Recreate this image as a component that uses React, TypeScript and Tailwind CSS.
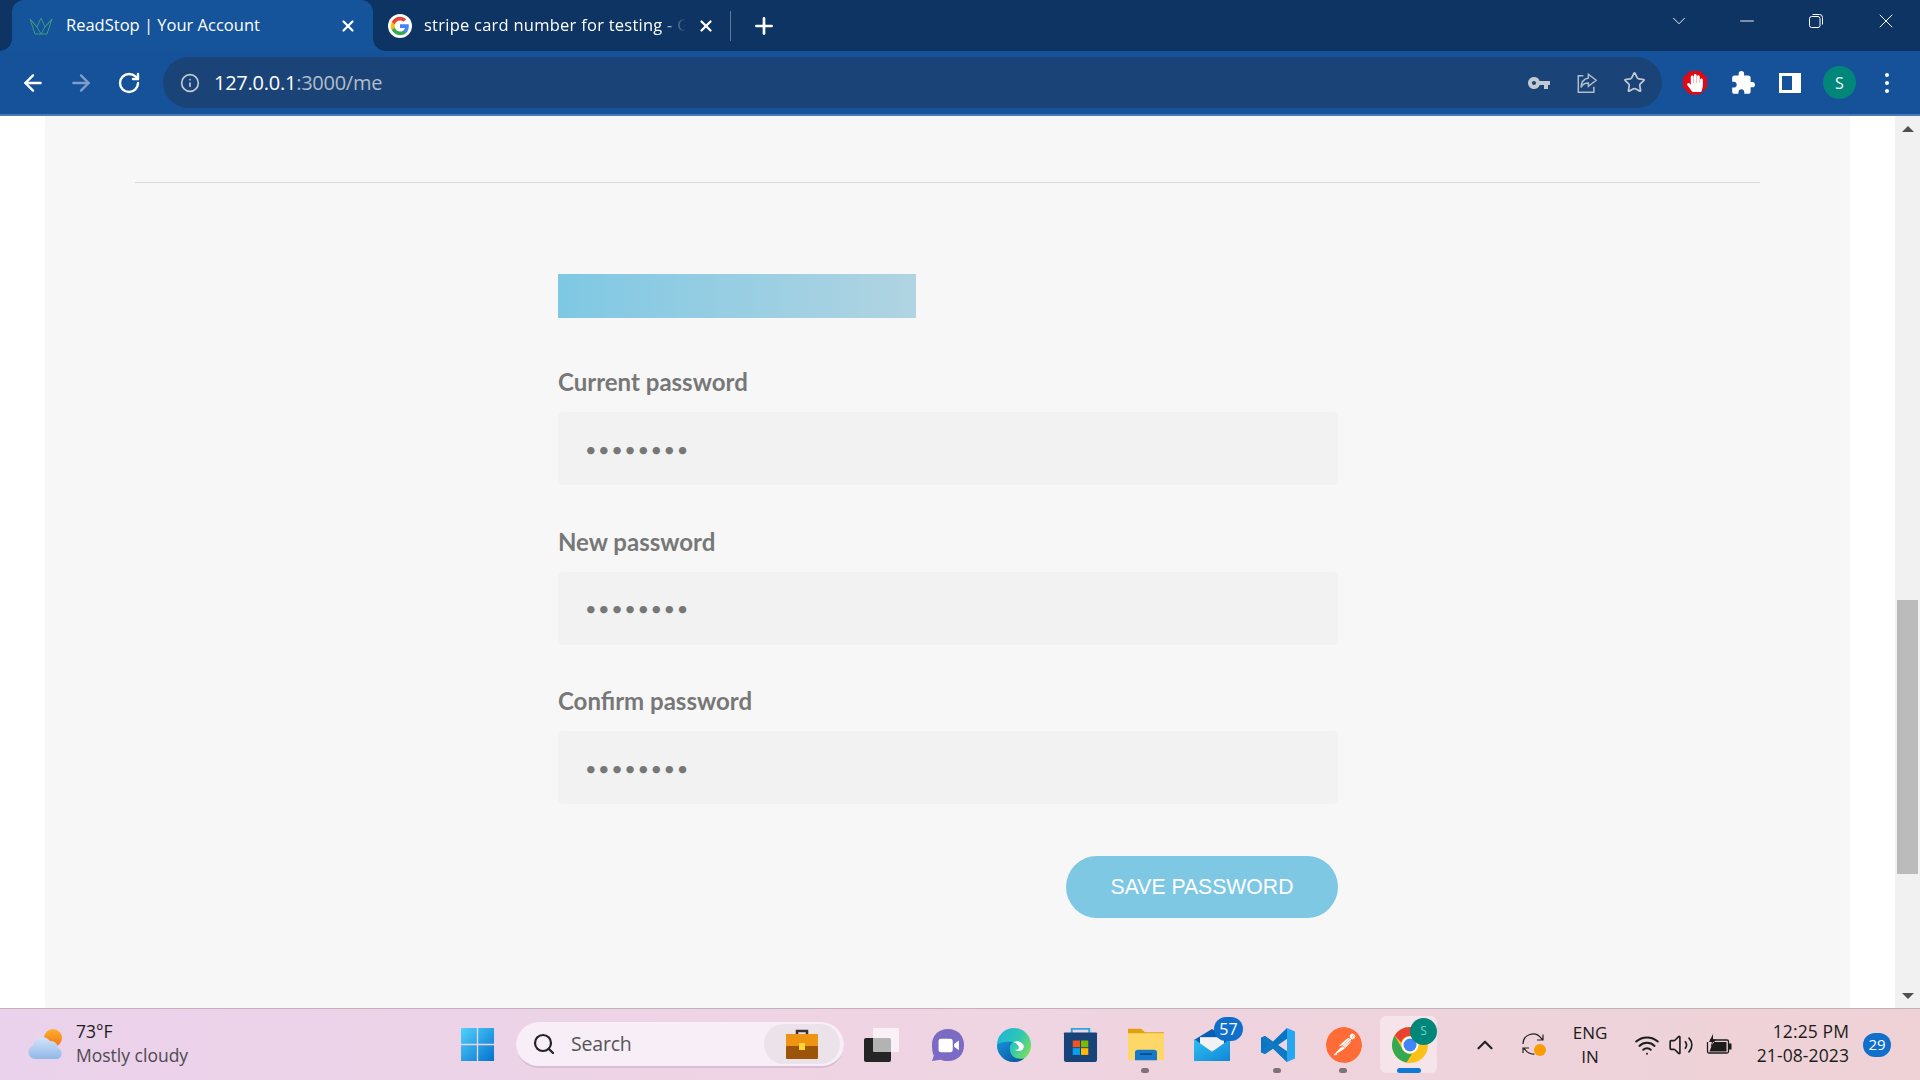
import { ArrowLeft, ArrowRight, ChevronDown, ChevronUp, Info, Minus, Plus, RotateCw, Search, Star, Volume2, Wifi, X } from 'lucide-react'
import type { ReactNode } from 'react'
import { FaHandPaper } from 'react-icons/fa'
import { MdExtension, MdVpnKey } from 'react-icons/md'
import { SiPostman } from 'react-icons/si'

const fields = ['Current password', 'New password', 'Confirm password']

function GoogleIcon() {
  return (
    <span className="flex h-6 w-6 shrink-0 items-center justify-center rounded-full bg-white">
      <svg viewBox="0 0 24 24" className="h-5 w-5">
        <path fill="#4285F4" d="M22.56 12.25c0-.78-.07-1.53-.2-2.25H12v4.26h5.92c-.26 1.37-1.04 2.53-2.21 3.31v2.77h3.57c2.08-1.92 3.28-4.74 3.28-8.09z" />
        <path fill="#34A853" d="M12 23c2.97 0 5.46-.98 7.28-2.66l-3.57-2.77c-.98.66-2.23 1.06-3.71 1.06-2.86 0-5.29-1.93-6.16-4.53H2.18v2.84C3.99 20.53 7.7 23 12 23z" />
        <path fill="#FBBC05" d="M5.84 14.09c-.22-.66-.35-1.36-.35-2.09s.13-1.43.35-2.09V7.07H2.18C1.43 8.55 1 10.22 1 12s.43 3.45 1.18 4.93l3.66-2.84z" />
        <path fill="#EA4335" d="M12 5.38c1.62 0 3.06.56 4.21 1.64l3.15-3.15C17.45 2.09 14.97 1 12 1 7.7 1 3.99 3.47 2.18 7.07l3.66 2.84c.87-2.6 3.3-4.53 6.16-4.53z" />
      </svg>
    </span>
  )
}

function CrownIcon() {
  return (
    <svg viewBox="0 0 24 20" className="h-5 w-6 shrink-0" fill="none" stroke="#3c9a7f" strokeWidth="1">
      <path d="M1 3l5 15h12l5-15-7 8-4-9-4 9zM8 11l4 7 4-7M1 3l7 8M23 3l-7 8" />
    </svg>
  )
}

function ShareIcon() {
  return (
    <svg viewBox="0 0 24 24" className="h-[22px] w-[22px]" fill="none" stroke="#b3bdc9" strokeWidth="1.6">
      <path d="M8 4H2.5v18h17v-6" />
      <path d="M13.5 2.5 22 9l-8.500 6.500V12c-4 0-6.500 1.500-8 5 0-6 3-9.500 8-10.500z" />
    </svg>
  )
}

function SidePanelIcon() {
  return (
    <svg viewBox="0 0 22 20" className="h-5 w-[22px]">
      <path fill="#fff" fillRule="evenodd" d="M0 0h22v20H0zM3 3v14h10V3z" />
    </svg>
  )
}

function RestoreIcon() {
  return (
    <svg viewBox="0 0 16 16" className="h-4 w-4" fill="none" stroke="#fff" strokeWidth="1">
      <rect x="1.500" y="3.500" width="10.500" height="11" rx="2" />
      <path d="M4.500 1.500h7a3 3 0 0 1 3 3v7" />
    </svg>
  )
}

function WeatherIcon() {
  return (
    <svg viewBox="0 0 38 38" className="h-[38px] w-[38px]">
      <defs>
        <linearGradient id="sun" x1="0" y1="0" x2="0" y2="1">
          <stop offset="0" stopColor="#fdb02a" />
          <stop offset="1" stopColor="#f0741a" />
        </linearGradient>
        <linearGradient id="cloud" x1="0" y1="0" x2="0" y2="1">
          <stop offset="0" stopColor="#d5e3f7" />
          <stop offset="1" stopColor="#8fb8ea" />
        </linearGradient>
      </defs>
      <circle cx="26" cy="12" r="9" fill="url(#sun)" />
      <path fill="url(#cloud)" d="M8 33a7 7 0 0 1-2-13.500A9.500 9.500 0 0 1 23 15a7 7 0 0 1 8 7 6 6 0 0 1 0 11z" />
    </svg>
  )
}

function StartIcon() {
  return (
    <svg viewBox="0 0 36 36" className="h-[35px] w-[35px]">
      <defs>
        <linearGradient id="start" x1="0" y1="0" x2="1" y2="1">
          <stop offset="0" stopColor="#4fd2fb" />
          <stop offset="1" stopColor="#0672cf" />
        </linearGradient>
      </defs>
      <path fill="url(#start)" d="M1 1h16.300v16.300H1zM18.700 1H35v16.300H18.700zM1 18.700h16.300V35H1zM18.700 18.700H35V35H18.700z" />
    </svg>
  )
}

function BriefcaseIcon() {
  return (
    <svg viewBox="0 0 34 34" className="h-[34px] w-[34px]">
      <path d="M12 8V4h10v4" fill="none" stroke="#3a3230" strokeWidth="2.500" />
      <rect x="1" y="7" width="32" height="13" fill="#ee9312" />
      <rect x="1" y="19" width="32" height="13" rx="1" fill="#9c5408" />
      <rect x="14" y="16" width="6" height="7" fill="#fbd534" />
    </svg>
  )
}

function TaskViewIcon() {
  return (
    <svg viewBox="0 0 36 34" className="h-[34px] w-9">
      <rect x="0" y="10" width="27" height="24" rx="2" fill="#252525" />
      <rect x="9" y="0" width="26" height="24" rx="1" fill="#fff" fillOpacity="0.65" />
    </svg>
  )
}

function ChatIcon() {
  return (
    <svg viewBox="0 0 36 38" preserveAspectRatio="none" className="h-[34px] w-[34px]">
      <path fill="#7b6bc4" d="M18 1c10 0 17 7 17 18s-7 18-17 18c-3 0-6-.700-8-1.500L1 37l2-6C1.500 28 1 23 1 19 1 8 8 1 18 1z" />
      <rect x="8" y="12" width="15" height="15" rx="2.500" fill="#fff" />
      <path fill="#fff" d="M24.500 18l5-4v11l-5-4z" />
    </svg>
  )
}

function EdgeIcon() {
  return (
    <svg viewBox="0 0 38 38" className="h-9 w-9">
      <defs>
        <linearGradient id="edgeTop" x1="0" y1="0" x2="1" y2="0.600">
          <stop offset="0" stopColor="#1bb3dc" />
          <stop offset="0.600" stopColor="#2fc7b4" />
          <stop offset="1" stopColor="#73dc62" />
        </linearGradient>
        <linearGradient id="edgeLow" x1="0" y1="0" x2="1" y2="1">
          <stop offset="0" stopColor="#1592d8" />
          <stop offset="1" stopColor="#0c4f9d" />
        </linearGradient>
      </defs>
      <circle cx="19" cy="19" r="18" fill="url(#edgeTop)" />
      <path fill="url(#edgeLow)" d="M1 19C1 29 9 37 19 37c4 0 8-1 11-4-7 2-14-1-15-8-1-4 0-7 3-9-8-1-14 0-17 3z" />
      <path fill="#fff" d="M18 16c4-2 9-1 11 3 1 2 0 5-3 6-3 .500-5 0-6-1 3 .500 5-1 4-3-1-3-4-5-6-5z" />
    </svg>
  )
}

function StoreIcon() {
  return (
    <svg viewBox="0 0 36 40" preserveAspectRatio="none" className="h-9 w-[35px]">
      <path d="M9 8V2h18v6" fill="none" stroke="#2aa8e0" strokeWidth="2" />
      <path fill="#17427a" d="M2 6h32a1 1 0 0 1 1 1v29a3 3 0 0 1-3 3H4a3 3 0 0 1-3-3V7a1 1 0 0 1 1-1z" />
      <path fill="#f05423" d="M10 15h7.500v7.500H10z" />
      <path fill="#7fba00" d="M18.500 15H26v7.500h-7.500z" />
      <path fill="#00a4ef" d="M10 23.500h7.500V31H10z" />
      <path fill="#ffb900" d="M18.500 23.500H26V31h-7.500z" />
    </svg>
  )
}

function FolderIcon() {
  return (
    <svg viewBox="0 0 36 38" preserveAspectRatio="none" className="h-[33px] w-9">
      <path fill="#e0a20c" d="M0 1h13l4 4h19v6H0z" />
      <rect y="6" width="36" height="31" fill="#fdd768" />
      <path fill="#1578c8" d="M7 37v-9a3 3 0 0 1 3-3h16a3 3 0 0 1 3 3v9z" />
      <rect x="12" y="29" width="12" height="2" fill="#0c4a8c" />
    </svg>
  )
}

function MailIcon() {
  return (
    <svg viewBox="0 0 36 36" preserveAspectRatio="none" className="h-[33px] w-9">
      <defs>
        <linearGradient id="mailFill" x1="0" y1="0" x2="1" y2="1">
          <stop offset="0" stopColor="#2fc1f0" />
          <stop offset="1" stopColor="#0f86d8" />
        </linearGradient>
      </defs>
      <path fill="#0a5fb0" d="M0 13 18 1l18 12v6H0z" />
      <path fill="#f2f2f2" d="M6 10h24v14H6z" />
      <path fill="url(#mailFill)" d="M0 12l18 14 18-14v24H0z" />
    </svg>
  )
}

function VsCodeIcon() {
  return (
    <svg viewBox="0 0 36 40" preserveAspectRatio="none" className="h-9 w-9">
      <path fill="#0a76c2" d="M27 1 13 16 5 10 1 12v16l4 2 8-6 14 15-0-12-9-7 9-7z" />
      <path fill="#25a7f2" d="M27 1l8 4v30l-8 4z" />
      <path fill="#1178c4" d="M1 12l4-2 22 20v9L13 24l-8 6-4-2 7-8z" />
    </svg>
  )
}

function PostmanIcon() {
  return (
    <span className="relative flex h-9 w-9 items-center justify-center rounded-full bg-white">
      <SiPostman className="h-9 w-9 text-[#ff6c37]" />
    </span>
  )
}

function ChromeIcon() {
  return (
    <svg viewBox="0 0 36 36" className="h-9 w-9">
      <circle cx="18" cy="18" r="18" fill="#fbc116" />
      <path fill="#e94235" d="M18 0a18 18 0 0 1 15.600 9H18a9 9 0 0 0-8.700 6.500L2.600 8.600A18 18 0 0 1 18 0z" />
      <path fill="#34a853" d="M2.600 8.600 9.500 20.500A9 9 0 0 0 20 26.800L14.500 35.600A18 18 0 0 1 2.600 8.600z" />
      <circle cx="18" cy="18" r="8.500" fill="#fff" />
      <circle cx="18" cy="18" r="6.500" fill="#4285f4" />
    </svg>
  )
}

function SyncIcon() {
  return (
    <svg viewBox="0 0 26 26" className="h-[26px] w-[26px]" fill="none" stroke="#222" strokeWidth="1.200">
      <path d="M2 12a10 10 0 0 1 18-6l2 2M22 2.500V8h-6" />
      <path d="M2 21v-5h6M2.500 16l2 2a10 10 0 0 0 9 4" />
      <circle cx="19" cy="18" r="6" fill="#f99d07" stroke="none" />
    </svg>
  )
}

function BatteryIcon() {
  return (
    <svg viewBox="0 0 26 24" className="h-6 w-[26px]">
      <path fill="none" stroke="#1c1c1c" strokeWidth="1.300" d="M4 7h17a1.500 1.500 0 0 1 1.500 1.500v10A1.500 1.500 0 0 1 21 20H3a1.500 1.500 0 0 1-1.500-1.500V9" />
      <path fill="#1c1c1c" d="M3.500 18.500 7 9h13.500v9.500zM23 10.500h2.500v6H23zM7 1 3 9h3l-1.500 5L10 6.500H7z" />
    </svg>
  )
}

function TaskbarCell({ children, pill, active }: { children: ReactNode; pill?: boolean; active?: boolean }) {
  return (
    <div className="relative flex h-full w-[66px] shrink-0 items-center justify-center">
      {active && <div className="absolute left-[3px] top-[7px] h-[57px] w-[57px] rounded-md bg-white/40" />}
      <div className="relative flex items-center justify-center">{children}</div>
      {pill && <div className="absolute bottom-[7px] left-[28px] h-[5px] w-2 rounded-full bg-[#7b7377]" />}
      {active && <div className="absolute bottom-[7px] left-[20px] h-[5px] w-6 rounded-full bg-[#0f78d4]" />}
    </div>
  )
}

function BrowserChrome() {
  return (
    <div className="shrink-0 font-['Open_Sans',sans-serif]">
      <div className="flex h-[51px] items-end bg-[#0d3462] pl-3">
        <div className="relative flex h-[51px] w-[361px] items-center rounded-t-xl bg-[#15539a] pl-[17px] pr-[16px] text-white">
          <span className="absolute -left-3 bottom-0 h-3 w-3 bg-[radial-gradient(circle_at_0_0,transparent_11.5px,#15539a_12px)]" />
          <span className="absolute -right-3 bottom-0 h-3 w-3 bg-[radial-gradient(circle_at_100%_0,transparent_11.5px,#15539a_12px)]" />
          <CrownIcon />
          <span className="ml-[13px] flex-1 truncate text-[16.500px]">ReadStop | Your Account</span>
          <X className="h-[18px] w-[18px]" strokeWidth={3} />
        </div>
        <div className="flex h-[51px] w-[357px] items-center pl-[15px] text-white">
          <GoogleIcon />
          <span className="ml-[12px] w-[262px] shrink-0 overflow-hidden whitespace-nowrap text-[16.500px] tracking-[0.250px] [mask-image:linear-gradient(to_right,black_90%,transparent)]">stripe card number for testing - G</span>
          <X className="ml-[11px] h-[18px] w-[18px] shrink-0" strokeWidth={3} />
          <div className="ml-[15px] h-[30px] w-px shrink-0 bg-[#5c7999]" />
          <Plus className="ml-[20px] h-[26px] w-[26px] shrink-0" strokeWidth={2.500} />
        </div>
        <div className="ml-auto flex h-full items-center pb-[9px]">
          <ChevronDown className="mr-[46px] h-[22px] w-[22px] text-white" strokeWidth={1} />
          <Minus className="mr-[50px] h-[22px] w-[22px] text-white" strokeWidth={1} />
          <div className="mr-[50px]"><RestoreIcon /></div>
          <X className="mr-[22px] h-6 w-6 text-white" strokeWidth={1} />
        </div>
      </div>
      <div className="flex h-[65px] items-start border-b-2 border-[#4a7ab3] bg-[#15529a] pt-[6px]">
        <div className="flex h-[51px] w-[163px] shrink-0 items-center">
          <ArrowLeft className="ml-[20px] h-[26px] w-[26px] text-white" strokeWidth={2.200} />
          <ArrowRight className="ml-[22px] h-[26px] w-[26px] text-[#7f9fc6]" strokeWidth={2.200} />
          <RotateCw className="ml-[23px] h-[24px] w-[24px] text-white" strokeWidth={2.400} />
        </div>
        <div className="flex h-[51px] w-[1499px] shrink-0 items-center rounded-full bg-[#1a4477]">
          <Info className="ml-[17px] h-5 w-5 text-[#c2c9d2]" />
          <span className="ml-[14px] text-[20px] tracking-[-0.250px] text-white">127.0.0.1<span className="text-[#b3bdc9]">:3000/me</span></span>
          <div className="ml-auto flex items-center gap-[25px] pr-[16px]">
            <MdVpnKey className="h-[24px] w-[24px] text-[#c2c9d2]" />
            <ShareIcon />
            <Star className="h-[23px] w-[23px] text-[#c2c9d2]" strokeWidth={1.800} />
          </div>
        </div>
        <div className="flex h-[51px] flex-1 items-center">
          <div className="ml-[21px] flex h-6 w-6 items-center justify-center bg-[#e30613] [clip-path:polygon(30%_0,70%_0,100%_30%,100%_70%,70%_100%,30%_100%,0_70%,0_30%)]">
            <FaHandPaper className="h-[18px] w-[18px] text-white" />
          </div>
          <MdExtension className="ml-[23px] h-[26px] w-[26px] text-white" />
          <div className="ml-[23px]"><SidePanelIcon /></div>
          <div className="ml-[22px] flex h-[33px] w-[33px] items-center justify-center rounded-full bg-[#01877a] text-[16px] text-white">S</div>
          <div className="ml-[29px] flex flex-col gap-[4px]">
            <span className="h-1 w-1 rounded-full bg-white" />
            <span className="h-1 w-1 rounded-full bg-white" />
            <span className="h-1 w-1 rounded-full bg-white" />
          </div>
        </div>
      </div>
    </div>
  )
}

function PasswordForm() {
  return (
    <div className="ml-[513px] flex w-[780px] flex-col">
      <div className="mb-[49px] mt-[91px] h-[44px] w-[358px] bg-gradient-to-r from-[#7ec8e3] to-[#b0d4e2]" />
      {fields.map((label) => (
        <div key={label} className="mb-[41.500px] flex flex-col">
          <label className="mb-[15px] h-[30px] font-['Lato',sans-serif] text-[24px] font-bold leading-[30px] text-[#777]">
            {label}
          </label>
          <input
            type="password"
            readOnly
            value="password"
            className="h-[73px] w-full rounded-[5px] bg-[#f2f2f2] px-[27px] font-['Lato',sans-serif] text-[20px] tracking-[1.500px] text-[#777] outline-none"
          />
        </div>
      ))}
      <button
        type="button"
        className="mt-[10.500px] h-[62px] w-[272px] self-end rounded-full bg-[#7ec8e3] font-['Liberation_Sans',sans-serif] text-[21.200px] text-white"
      >
        SAVE PASSWORD
      </button>
    </div>
  )
}

function Scrollbar() {
  return (
    <div className="flex w-[25px] shrink-0 flex-col items-center bg-[#f1f1f1] pt-[10px]">
      <div className="h-0 w-0 border-x-[6px] border-b-[6px] border-x-transparent border-b-[#505050]" />
      <div className="mt-[468px] h-[274px] w-[21px] bg-[#bbbbbb]" />
      <div className="mb-[9px] mt-auto h-0 w-0 border-x-[6px] border-t-[6px] border-x-transparent border-t-[#505050]" />
    </div>
  )
}

function Taskbar() {
  return (
    <div className="flex h-[72px] shrink-0 items-center border-t border-[#c2b0ba] bg-gradient-to-r from-[#ebd2ec] via-[#efd4e2] to-[#eed2d6] font-['Open_Sans',sans-serif] text-[#1c1c1c]">
      <div className="ml-[27px] flex w-[433px] shrink-0 items-center">
        <WeatherIcon />
        <div className="ml-[11px] flex flex-col pb-[3px] text-[17.500px] leading-[24px]">
          <span>73°F</span>
          <span className="text-[#4e4a50]">Mostly cloudy</span>
        </div>
      </div>
      <div className="flex w-[56px] shrink-0 justify-start"><StartIcon /></div>
      <div className="flex h-[46px] w-[328px] shrink-0 items-center rounded-full border-b-2 border-[#d8bdd4] bg-[#f7eef7] pl-[16px] pr-[4px]">
        <Search className="h-[24px] w-[24px] text-[#222]" strokeWidth={2.200} />
        <span className="ml-[15px] text-[19.500px] tracking-[-0.200px] text-[#555]">Search</span>
        <div className="ml-auto flex h-[40px] w-[76px] items-center justify-center rounded-full bg-[#ebe2ea]"><BriefcaseIcon /></div>
      </div>
      <div className="ml-[5px] flex h-full items-center">
        <TaskbarCell><TaskViewIcon /></TaskbarCell>
        <TaskbarCell><ChatIcon /></TaskbarCell>
        <TaskbarCell><EdgeIcon /></TaskbarCell>
        <TaskbarCell><StoreIcon /></TaskbarCell>
        <TaskbarCell pill><FolderIcon /></TaskbarCell>
        <TaskbarCell>
          <MailIcon />
          <span className="absolute -right-[13px] -top-[11px] flex h-[24px] w-[29px] items-center justify-center rounded-full bg-[#0f6fcb] text-[16px] text-white">57</span>
        </TaskbarCell>
        <TaskbarCell pill><VsCodeIcon /></TaskbarCell>
        <TaskbarCell pill><PostmanIcon /></TaskbarCell>
        <TaskbarCell active>
          <ChromeIcon />
          <span className="absolute -right-[9px] -top-[9px] flex h-[27px] w-[27px] items-center justify-center rounded-full bg-[#01877a] text-[12px] text-[#7fd0c5]">S</span>
        </TaskbarCell>
      </div>
      <ChevronUp className="ml-[29px] h-[26px] w-[26px] text-[#222]" strokeWidth={2} />
      <div className="ml-[23px]"><SyncIcon /></div>
      <div className="ml-[18px] flex w-[50px] flex-col items-center text-[17px] leading-[24px]">
        <span>ENG</span>
        <span>IN</span>
      </div>
      <Wifi className="ml-[19px] h-[26px] w-[26px] text-[#1c1c1c]" strokeWidth={1.800} />
      <Volume2 className="ml-[8px] h-[26px] w-[26px] text-[#1c1c1c]" strokeWidth={1.500} />
      <div className="ml-[12px]"><BatteryIcon /></div>
      <div className="ml-[17px] flex w-[100px] flex-col items-end pb-[3px] text-[17.500px] leading-[24px] tracking-[0.100px]">
        <span className="whitespace-nowrap">12:25 PM</span>
        <span className="whitespace-nowrap">21-08-2023</span>
      </div>
      <div className="ml-[14px] flex h-[24px] w-[28px] items-center justify-center rounded-full bg-[#0f6fcb] text-[15px] text-white">29</div>
    </div>
  )
}

export default function App() {
  return (
    <div className="flex h-screen flex-col overflow-hidden bg-white">
      <BrowserChrome />
      <div className="flex min-h-0 flex-1">
        <div className="w-[45px] shrink-0 bg-white" />
        <div className="flex-1 bg-[#f7f7f7] pt-[66px]">
          <div className="ml-[90px] mr-[90px] h-px bg-[#d8d8d8]" />
          <PasswordForm />
        </div>
        <div className="w-[45px] shrink-0 bg-white" />
        <Scrollbar />
      </div>
      <Taskbar />
    </div>
  )
}
